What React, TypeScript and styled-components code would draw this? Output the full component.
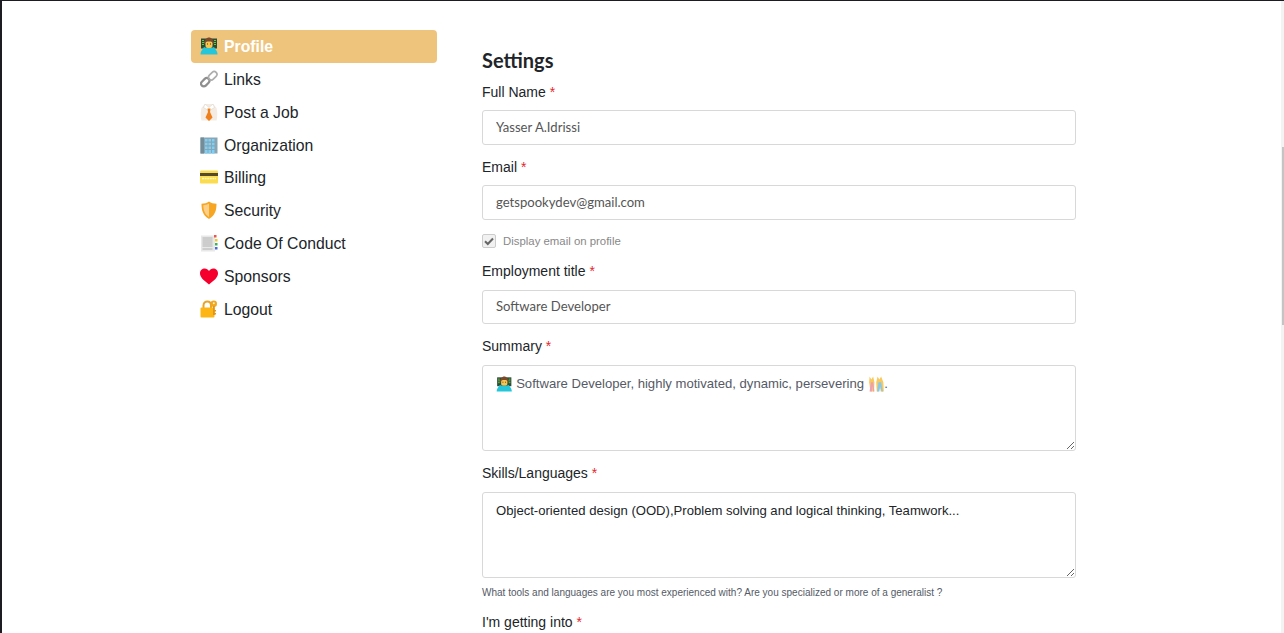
import React from 'react';
import styled, { createGlobalStyle } from 'styled-components';

const GlobalStyle = createGlobalStyle`
  html, body {
    margin: 0;
    height: 100%;
    overflow: hidden;
    background: #fff;
  }
  * { box-sizing: border-box; }
`;

const Screen = styled.div`
  display: flex;
  height: 633px;
  border-top: 1px solid #1c1c22;
  border-left: 2px solid #1c1c22;
  background: #fff;
  overflow: hidden;
`;

const Page = styled.div`
  flex: 1;
  display: flex;
  align-items: flex-start;
  padding: 29px 0 0 189px;
  font-family: "Liberation Sans", Arial, sans-serif;
  color: #212529;
`;

const ScrollTrack = styled.div`
  width: 3px;
  background: #f3f3f3;
  padding-top: 146px;
`;

const ScrollThumb = styled.div`
  width: 2px;
  height: 178px;
  margin-left: 1px;
  background: #c4c4c4;
`;

const Sidebar = styled.nav`
  width: 246px;
  margin-right: 45px;
  display: flex;
  flex-direction: column;
`;

const NavItem = styled.a<{ $active?: boolean }>`
  display: flex;
  align-items: center;
  gap: 6px;
  height: 32.8px;
  padding: 1.8px 0 0 9px;
  border-radius: 4px;
  font-size: 15.75px;
  font-weight: ${p => (p.$active ? 700 : 400)};
  color: ${p => (p.$active ? '#fff' : '#212529')};
  background: ${p => (p.$active ? '#eec47c' : 'transparent')};
`;

const NavGlyph = styled.svg`
  width: 18px;
  height: 18px;
  margin-top: -2px;
  flex: none;
`;

const InlineGlyph = styled.svg`
  width: 16.5px;
  height: 16px;
  vertical-align: -4px;
`;

const Form = styled.form`
  width: 594px;
  display: flex;
  flex-direction: column;
`;

const Heading = styled.h2`
  margin: 20px 0 0;
  font: 700 20px/20px Lato, sans-serif;
  color: #212529;
`;

const Label = styled.label<{ $tight?: boolean }>`
  display: block;
  margin: ${p => (p.$tight ? '12.5px 0 1px' : '13.5px 0 0')};
  font-size: 14px;
  line-height: 16px;
  color: #212529;
`;

const Required = styled.span`
  color: #e3262e;
`;

const Input = styled.input<{ $short?: boolean }>`
  display: block;
  width: 100%;
  height: ${p => (p.$short ? 34 : 35)}px;
  margin: 10.5px 0 ${p => (p.$short ? 1 : 0)}px;
  padding: 0 13px 2px;
  border: 1px solid #d8d8d8;
  border-radius: 3px;
  font: 400 13.1px Lato, sans-serif;
  color: #555;
  background: #fff;
  outline: none;
`;

const TextBox = styled.div<{ $dark?: boolean }>`
  width: 100%;
  height: 86px;
  margin: 10.5px 0 1px;
  padding: 10px 13px;
  border: 1px solid #d8d8d8;
  border-radius: 3px;
  font-size: 13.1px;
  line-height: 16px;
  color: ${p => (p.$dark ? '#212529' : '#555a66')};
  overflow: auto;
  resize: vertical;
`;

const CheckRow = styled.label`
  display: flex;
  align-items: center;
  gap: 7px;
  margin: 14px 0 2px;
  font-size: 11.4px;
  line-height: 14px;
  color: #888;
`;

const CheckBox = styled.span`
  display: flex;
  align-items: center;
  justify-content: center;
  width: 14px;
  height: 14px;
  border: 1px solid #ccc;
  border-radius: 2px;
  background: #f1f1f1;
`;

const CheckMark = styled.svg`
  width: 10px;
  height: 10px;
`;

const Hint = styled.small`
  display: block;
  margin: 8px 0 1px;
  font-size: 10.02px;
  line-height: 12px;
  color: #555a66;
`;

const technologist = (
  <>
    <rect x="1" y="1.500" width="16" height="10" fill="#2f4a33" />
    <path d="M2 3.500h2M2 5.500h2.500M2 7.500h2M14 3.500h2M13.500 5.500h2.500M14 7.500h2" stroke="#63c74d" strokeWidth="1" />
    <path d="M4.500 7c-.5-4 2-6.500 4.500-6.500S14 3 13.500 7l-1 .5h-7z" fill="#7a4a2a" />
    <rect x="5.500" y="4.500" width="7" height="6.500" rx="2" fill="#f7c64e" />
    <path d="M7 7h1M10 7h1" stroke="#4e342e" strokeWidth="1" />
    <path d="M.5 17.500c0-2 .5-3 1.500-4.500l2-3 2.500 1h5l2.500-1 2 3c1 1.500 1.500 2.500 1.500 4.500z" fill="#26c6da" />
  </>
);

const dancers = (
  <>
    <path d="M1.500.5l2 3.500 2-3.500L7 7 6.500 17.500H2.500L1 7z" fill="#f7c95f" />
    <path d="M10.500.5l2 3.500 2-3.500L17 7l.5 10.500H14l-1-5-1.500 5H9.500L9 7z" fill="#f7c95f" />
    <path d="M3 7h2.500l1.500 10.500H5.500L4.500 11 4 17.500H1.500z" fill="#ee9fb4" />
    <path d="M11.500 7h3l2 10.500H15l-1.500-6-1 6H10z" fill="#86c8ea" />
  </>
);

const glyphs: Record<string, React.ReactNode> = {
  technologist,
  link: (
    <g fill="none">
      <rect x="0.500" y="9.500" width="9.500" height="5.500" rx="2.750" transform="rotate(-45 5.250 12.250)" stroke="#8f8f8f" strokeWidth="2.200" />
      <rect x="8" y="3" width="9.500" height="5.500" rx="2.750" transform="rotate(-45 12.750 5.750)" stroke="#adadad" strokeWidth="1.700" />
    </g>
  ),
  tie: (
    <>
      <path d="M1.500 17.500C.5 14 .5 8 1.500 5L5 1h8l3.500 4c1 3 1 9 0 12.500z" fill="#f4ebe2" />
      <path d="M5 1l4 3.500L13 1l1.500 3.500L10.500 7h-3L3.500 4.500z" fill="#fff" stroke="#ddd4ca" strokeWidth=".6" />
      <path d="M7.500 5.500h3l-.5 3.500 2.500 5.500L9 18l-3.500-3.500L8 9z" fill="#ef7f1a" />
    </>
  ),
  office: (
    <>
      <rect x="0.500" y="1.500" width="17" height="16" fill="#8ba5b3" />
      <rect x="0.500" y="1.500" width="3.500" height="16" fill="#748b98" />
      <g fill="#7dd0f7">
        <path d="M5 3h2.500v2.500H5zM8.500 3H11v2.500H8.500zM12 3h2.500v2.500H12z" />
        <path d="M5 6.700h2.500v2.500H5zM8.500 6.700H11v2.500H8.500zM12 6.700h2.500v2.500H12z" />
        <path d="M5 10.400h2.500v2.500H5zM8.500 10.400H11v2.500H8.500zM12 10.400h2.500v2.500H12z" />
        <path d="M5 14h2.500v3.500H5zM8.500 14H11v3.500H8.500zM12 14h2.500v3.500H12z" />
      </g>
    </>
  ),
  card: (
    <>
      <rect x="0" y="2.500" width="18" height="13" rx="1" fill="#fbdc4e" />
      <rect x="0" y="5" width="18" height="3" fill="#55482c" />
      <path d="M2 10.500h14" stroke="#fff6c0" strokeWidth="1.500" strokeDasharray="2 .6" />
    </>
  ),
  shield: (
    <>
      <path d="M9 .5c2 1.500 4.500 2.200 7.500 2.200 0 6.500-1.200 11.300-7.500 15.300-6.300-4-7.500-8.800-7.500-15.300C4.500 2.700 7 2 9 .5z" fill="#f6a623" />
      <path d="M9 2.500C7.300 3.500 5.500 4.100 3.300 4.300 3.500 9.500 4.800 13.200 9 16z" fill="#fdd08a" />
    </>
  ),
  ledger: (
    <>
      <rect x="1" y="1.500" width="14" height="16" fill="#e8e8e8" />
      <path d="M2.500 4h10M2.500 6h10M2.500 8h10M2.500 10h10M2.500 12h10M2.500 15h10" stroke="#ababab" strokeWidth=".9" />
      <rect x="14" y="1" width="2.500" height="2.500" fill="#e8584f" />
      <rect x="15" y="5" width="2.500" height="2.500" fill="#f4c534" />
      <rect x="15" y="9" width="2.500" height="2.500" fill="#3fb454" />
      <rect x="15" y="13" width="2.500" height="2.500" fill="#4a6bd6" />
    </>
  ),
  heart: (
    <path d="M9 17.500C3.200 13 0 10.200 0 6.300 0 3.500 2.200 1.500 4.800 1.500c1.700 0 3.200.9 4.200 2.400 1-1.500 2.500-2.400 4.200-2.400C15.800 1.500 18 3.500 18 6.300c0 3.900-3.200 6.700-9 11.200z" fill="#f5002d" />
  ),
  lock: (
    <>
      <path d="M3.500 9V5.500C3.500 3 5.300 1.500 7.300 1.500s3.700 1.500 3.700 4V9" fill="none" stroke="#e6a42a" strokeWidth="2" />
      <rect x="0.500" y="7.500" width="14" height="10" rx="1" fill="#fdb515" />
      <circle cx="13.800" cy="3.800" r="3.200" fill="#f2a71d" />
      <circle cx="13.800" cy="3.300" r="1" fill="#fff3cf" />
      <path d="M13 6h1.800v9H13zM14.800 10h1.200v1.500h-1.200zM14.800 13h1.200v1.500h-1.200z" fill="#e0951a" />
    </>
  ),
};

const links = [
  ['technologist', 'Profile'],
  ['link', 'Links'],
  ['tie', 'Post a Job'],
  ['office', 'Organization'],
  ['card', 'Billing'],
  ['shield', 'Security'],
  ['ledger', 'Code Of Conduct'],
  ['heart', 'Sponsors'],
  ['lock', 'Logout'],
];

const App: React.FC = () => (
  <>
    <GlobalStyle />
    <Screen>
      <Page>
        <Sidebar>
          {links.map(([icon, title], i) => (
            <NavItem key={title} $active={i === 0}>
              <NavGlyph viewBox="0 0 18 18">{glyphs[icon]}</NavGlyph>
              {title}
            </NavItem>
          ))}
        </Sidebar>
        <Form>
          <Heading>Settings</Heading>
          <Label>Full Name <Required>*</Required></Label>
          <Input readOnly value="Yasser A.Idrissi" />
          <Label>Email <Required>*</Required></Label>
          <Input readOnly value="getspookydev@gmail.com" />
          <CheckRow>
            <CheckBox>
              <CheckMark viewBox="0 0 10 10">
                <path d="M1 5.200l2.800 2.800L9 2.500" fill="none" stroke="#666" strokeWidth="2" />
              </CheckMark>
            </CheckBox>
            Display email on profile
          </CheckRow>
          <Label $tight>Employment title <Required>*</Required></Label>
          <Input $short readOnly value="Software Developer" />
          <Label $tight>Summary <Required>*</Required></Label>
          <TextBox>
            <InlineGlyph viewBox="0 0 18 18">{technologist}</InlineGlyph> Software Developer, highly motivated, dynamic, persevering <InlineGlyph viewBox="0 0 18 18">{dancers}</InlineGlyph>.
          </TextBox>
          <Label $tight>Skills/Languages <Required>*</Required></Label>
          <TextBox $dark>Object-oriented design (OOD),Problem solving and logical thinking, Teamwork...</TextBox>
          <Hint>What tools and languages are you most experienced with? Are you specialized or more of a generalist ?</Hint>
          <Label>I'm getting into <Required>*</Required></Label>
        </Form>
      </Page>
      <ScrollTrack>
        <ScrollThumb />
      </ScrollTrack>
    </Screen>
  </>
);

export default App;
